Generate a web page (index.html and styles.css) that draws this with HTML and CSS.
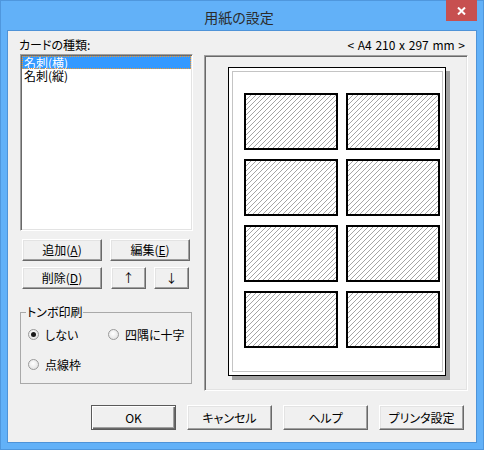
FILE: index.html
```html
<!DOCTYPE html>
<html lang="ja">
<head>
<meta charset="utf-8">
<title>用紙の設定</title>
<link rel="stylesheet" href="styles.css">
</head>
<body>
<svg class="defs" width="0" height="0" aria-hidden="true">
  <defs>
    <pattern id="hatch" patternUnits="userSpaceOnUse" width="5" height="5">
      <path d="M4 0h1v1h-1z M3 1h1v1h-1z M2 2h1v1h-1z M1 3h1v1h-1z M0 4h1v1h-1z" fill="#a4a4a4" shape-rendering="crispEdges"/>
    </pattern>
  </defs>
</svg>
<div class="window">
  <div class="titlebar">
    <div class="title">用紙の設定</div>
    <div class="close">
      <svg width="9" height="8" viewBox="0 0 9 8"><path d="M1 0.5 L8 7.5 M8 0.5 L1 7.5" stroke="#fff" stroke-width="2" fill="none"/></svg>
    </div>
  </div>
  <div class="client">
    <div class="top">
      <div class="left">
        <div class="label">カードの種類:</div>
        <div class="listbox">
          <div class="item sel">名刺(横)</div>
          <div class="item">名刺(縦)</div>
        </div>
        <div class="btnrow row1">
          <div class="btn w80">追加(<u>A</u>)</div>
          <div class="btn w80 ml8">編集(<u>E</u>)</div>
        </div>
        <div class="btnrow row2">
          <div class="btn w80">削除(<u>D</u>)</div>
          <div class="btn w35 ml9">↑</div>
          <div class="btn w35 ml8">↓</div>
        </div>
        <div class="group">
          <div class="group-label">トンボ印刷</div>
          <div class="radios">
            <div class="radio"><span class="dot checked"></span><span>しない</span></div>
            <div class="radio"><span class="dot"></span><span>四隅に十字</span></div>
            <div class="radio"><span class="dot"></span><span>点線枠</span></div>
          </div>
        </div>
      </div>
      <div class="right">
        <div class="size">&lt; A4 210 x 297 mm &gt;</div>
        <div class="preview">
          <div class="paper">
            <div class="margin">
              <div class="card"><svg class="hatch"><rect width="100%" height="100%" fill="url(#hatch)"/></svg></div>
              <div class="card"><svg class="hatch"><rect width="100%" height="100%" fill="url(#hatch)"/></svg></div>
              <div class="card"><svg class="hatch"><rect width="100%" height="100%" fill="url(#hatch)"/></svg></div>
              <div class="card"><svg class="hatch"><rect width="100%" height="100%" fill="url(#hatch)"/></svg></div>
              <div class="card"><svg class="hatch"><rect width="100%" height="100%" fill="url(#hatch)"/></svg></div>
              <div class="card"><svg class="hatch"><rect width="100%" height="100%" fill="url(#hatch)"/></svg></div>
              <div class="card"><svg class="hatch"><rect width="100%" height="100%" fill="url(#hatch)"/></svg></div>
              <div class="card"><svg class="hatch"><rect width="100%" height="100%" fill="url(#hatch)"/></svg></div>
            </div>
          </div>
        </div>
      </div>
    </div>
    <div class="bottom">
      <div class="btn big default">OK</div>
      <div class="btn big">キャンセル</div>
      <div class="btn big">ヘルプ</div>
      <div class="btn big">プリンタ設定</div>
    </div>
  </div>
</div>
</body>
</html>
```

FILE: styles.css
```css
* { box-sizing: border-box; margin: 0; padding: 0; }
html, body { width: 484px; height: 450px; overflow: hidden; }
body {
  font-family: "Noto Sans CJK JP", "Noto Sans", sans-serif;
  font-size: 12px;
  color: #000;
  font-feature-settings: "palt";
  background: #62b1f8;
}
.defs { display: block; width: 0; height: 0; overflow: hidden; }
.window {
  width: 484px;
  height: 450px;
  background: #62b1f8;
  border: 1px solid #4f97dd;
  display: flex;
  flex-direction: column;
}
.titlebar {
  height: 29px;
  display: grid;
  grid-template-columns: 1fr auto 1fr;
  align-items: center;
  padding-right: 6px;
}
.title {
  grid-column: 2;
  font-size: 14px;
  line-height: 20px;
  color: #2b2b2b;
  margin-top: 2px;
}
.close {
  grid-column: 3;
  justify-self: end;
  align-self: start;
  width: 31px;
  height: 21px;
  margin-top: -1px;
  background: #c75050;
  display: flex;
  align-items: center;
  justify-content: center;
}
.client {
  margin: 0 6px;
  height: 413px;
  border: 1px solid #4e93d8;
  background: #f0f0f0;
  padding: 6px 8px 0 11px;
  display: flex;
  flex-direction: column;
}
.top { display: flex; gap: 11px; }
.left { width: 174px; display: flex; flex-direction: column; }
.right { width: 264px; display: flex; flex-direction: column; }
.label, .size { line-height: 15px; height: 15px; white-space: nowrap; }
.size { text-align: right; padding-right: 3px; word-spacing: 1px; }

.listbox {
  margin: 2px 0 0 1px;
  width: 173px;
  height: 177px;
  background: #fff;
  border: 1px solid;
  border-color: #a0a0a0 #fff #fff #a0a0a0;
  box-shadow: inset 1px 1px #696969, inset -1px -1px #e3e3e3;
  padding: 1px;
}
.item {
  height: 13px;
  line-height: 13px;
  padding-left: 2px;
  white-space: nowrap;
}
.item.sel {
  background: #3399ff;
  color: #fff;
  outline: 1px dotted #f59a2c;
  outline-offset: -1px;
}

.btnrow { display: flex; padding-left: 3px; }
.row1 { margin-top: 8px; }
.row2 { margin-top: 6px; }
.btn {
  height: 22px;
  background: #f0f0f0;
  border: 1px solid;
  border-color: #fff #696969 #696969 #fff;
  box-shadow: inset -1px -1px #a0a0a0, inset 1px 1px #e3e3e3;
  display: flex;
  align-items: center;
  justify-content: center;
  white-space: nowrap;
  line-height: 14px;
}
.btn u { text-decoration: underline; text-underline-offset: 1px; }
.w80 { width: 80px; }
.w35 { width: 35px; }
.ml8 { margin-left: 8px; }
.ml9 { margin-left: 9px; }

.group {
  margin: 23px 0 0 1px;
  width: 172px;
  border: 1px solid #a9a9a9;
}
.group-label {
  width: max-content;
  margin: -8px 0 0 5px;
  padding: 0 1px;
  line-height: 14px;
  background: #f0f0f0;
}
.radios {
  display: grid;
  grid-template-columns: 80px auto;
  row-gap: 14px;
  padding: 7px 0 11px 7px;
}
.radio {
  display: flex;
  align-items: center;
  gap: 6px;
  height: 16px;
  white-space: nowrap;
}
.dot {
  width: 11px;
  height: 11px;
  border-radius: 50%;
  border: 1px solid #9a9a9a;
  background: radial-gradient(circle at 45% 40%, #ffffff 0%, #e6e6e6 70%, #d4d4d4 100%);
  display: flex;
  align-items: center;
  justify-content: center;
}
.dot.checked::after {
  content: "";
  width: 5px;
  height: 5px;
  border-radius: 50%;
  background: #1a1a1a;
}

.preview {
  margin-top: 3px;
  width: 264px;
  height: 336px;
  background: #f0f0f0;
  border: 1px solid;
  border-color: #a0a0a0 #fff #fff #a0a0a0;
  box-shadow: inset 1px 1px #696969, inset -1px -1px #e3e3e3;
  padding: 11px 0 0 23px;
}
.paper {
  width: 218px;
  height: 309px;
  background: #fff;
  border: 1px solid #000;
  box-shadow: 4px 4px 0 #a0a0a0;
  padding: 3px 2px 3px 3px;
}
.margin {
  height: 100%;
  border: 1px solid #c4c4c4;
  padding: 21px 2px 0 11px;
  display: grid;
  grid-template-columns: 94px 94px;
  grid-template-rows: repeat(4, 57px);
  column-gap: 8px;
  row-gap: 9px;
}
.card {
  border: 2px solid #000;
  background: #fff;
}
.hatch { display: block; width: 100%; height: 100%; }

.bottom {
  margin-top: 14px;
  display: flex;
  justify-content: flex-end;
  gap: 11px;
  padding-right: 4px;
}
.btn.big { width: 85px; height: 25px; }
.btn.default {
  border-color: #5a5a5a;
  box-shadow: inset 1px 1px #fff, inset -1px -1px #696969, inset -2px -2px #a0a0a0;
}
```
